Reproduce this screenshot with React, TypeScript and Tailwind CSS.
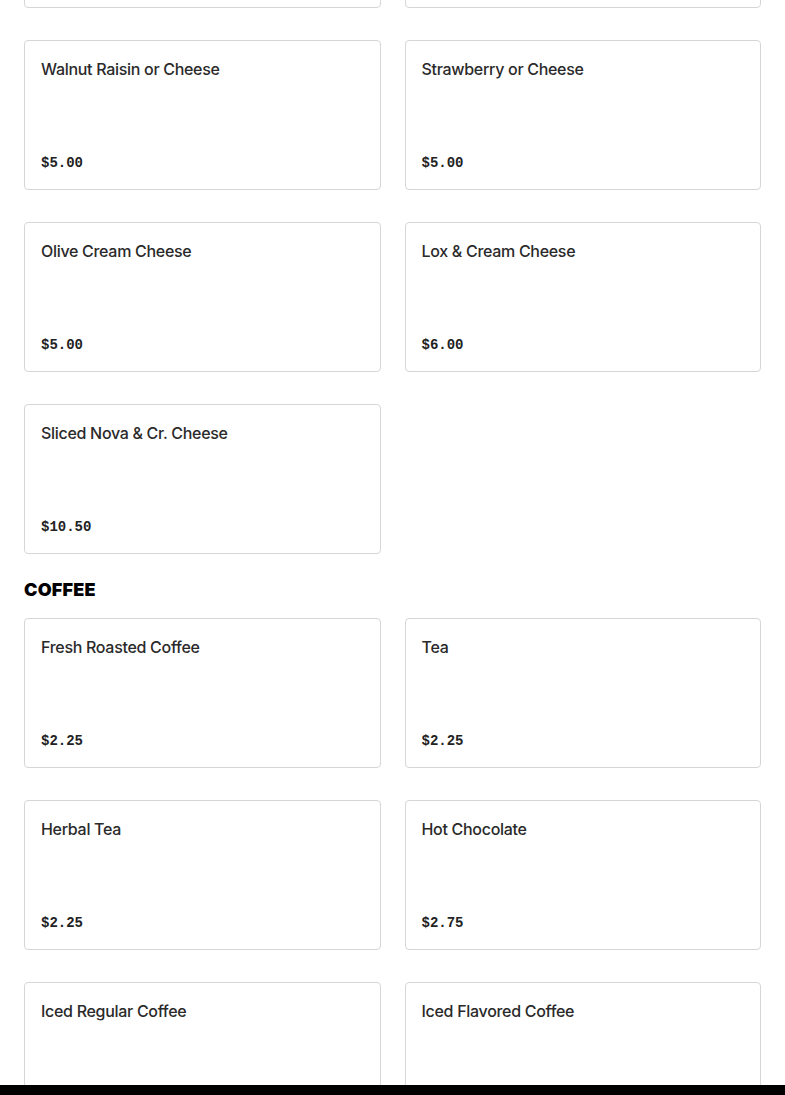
type Item = { name: string; price: string }

const bagels: Item[] = [
  { name: 'Plain Cream Cheese', price: '$4.50' },
  { name: 'Scallion Cream Cheese', price: '$5.00' },
  { name: 'Walnut Raisin or Cheese', price: '$5.00' },
  { name: 'Strawberry or Cheese', price: '$5.00' },
  { name: 'Olive Cream Cheese', price: '$5.00' },
  { name: 'Lox & Cream Cheese', price: '$6.00' },
  { name: 'Sliced Nova & Cr. Cheese', price: '$10.50' },
]

const coffee: Item[] = [
  { name: 'Fresh Roasted Coffee', price: '$2.25' },
  { name: 'Tea', price: '$2.25' },
  { name: 'Herbal Tea', price: '$2.25' },
  { name: 'Hot Chocolate', price: '$2.75' },
  { name: 'Iced Regular Coffee', price: '$2.75' },
  { name: 'Iced Flavored Coffee', price: '$3.25' },
]

function MenuCard({ item }: { item: Item }) {
  return (
    <div className="h-[150px] flex flex-col justify-between rounded-[4px] border border-[#d6d6d6] bg-white p-4">
      <p className="text-[16px] leading-6 font-medium text-[#2a2a2a] font-['Inter',sans-serif] tracking-[-0.3px]">
        {item.name}
      </p>
      <p className="text-[14px] leading-5 font-bold text-[#222] font-['Liberation_Mono',monospace]">
        {item.price}
      </p>
    </div>
  )
}

export default function App() {
  return (
    <div className="h-[1095px] overflow-hidden bg-white">
      <div className="px-6 -mt-[142px]">
        <div className="grid grid-cols-2 gap-x-6 gap-y-8">
          {bagels.map(item => (
            <MenuCard key={item.name} item={item} />
          ))}
        </div>
        <h2 className="mt-6 mb-4 text-[18px] leading-6 font-black text-black font-['Inter',sans-serif] tracking-[0.2px]">
          COFFEE
        </h2>
        <div className="grid grid-cols-2 gap-x-6 gap-y-8">
          {coffee.map(item => (
            <MenuCard key={item.name} item={item} />
          ))}
        </div>
      </div>
      <div className="fixed bottom-0 left-0 right-0 h-[10px] bg-black" />
    </div>
  )
}
